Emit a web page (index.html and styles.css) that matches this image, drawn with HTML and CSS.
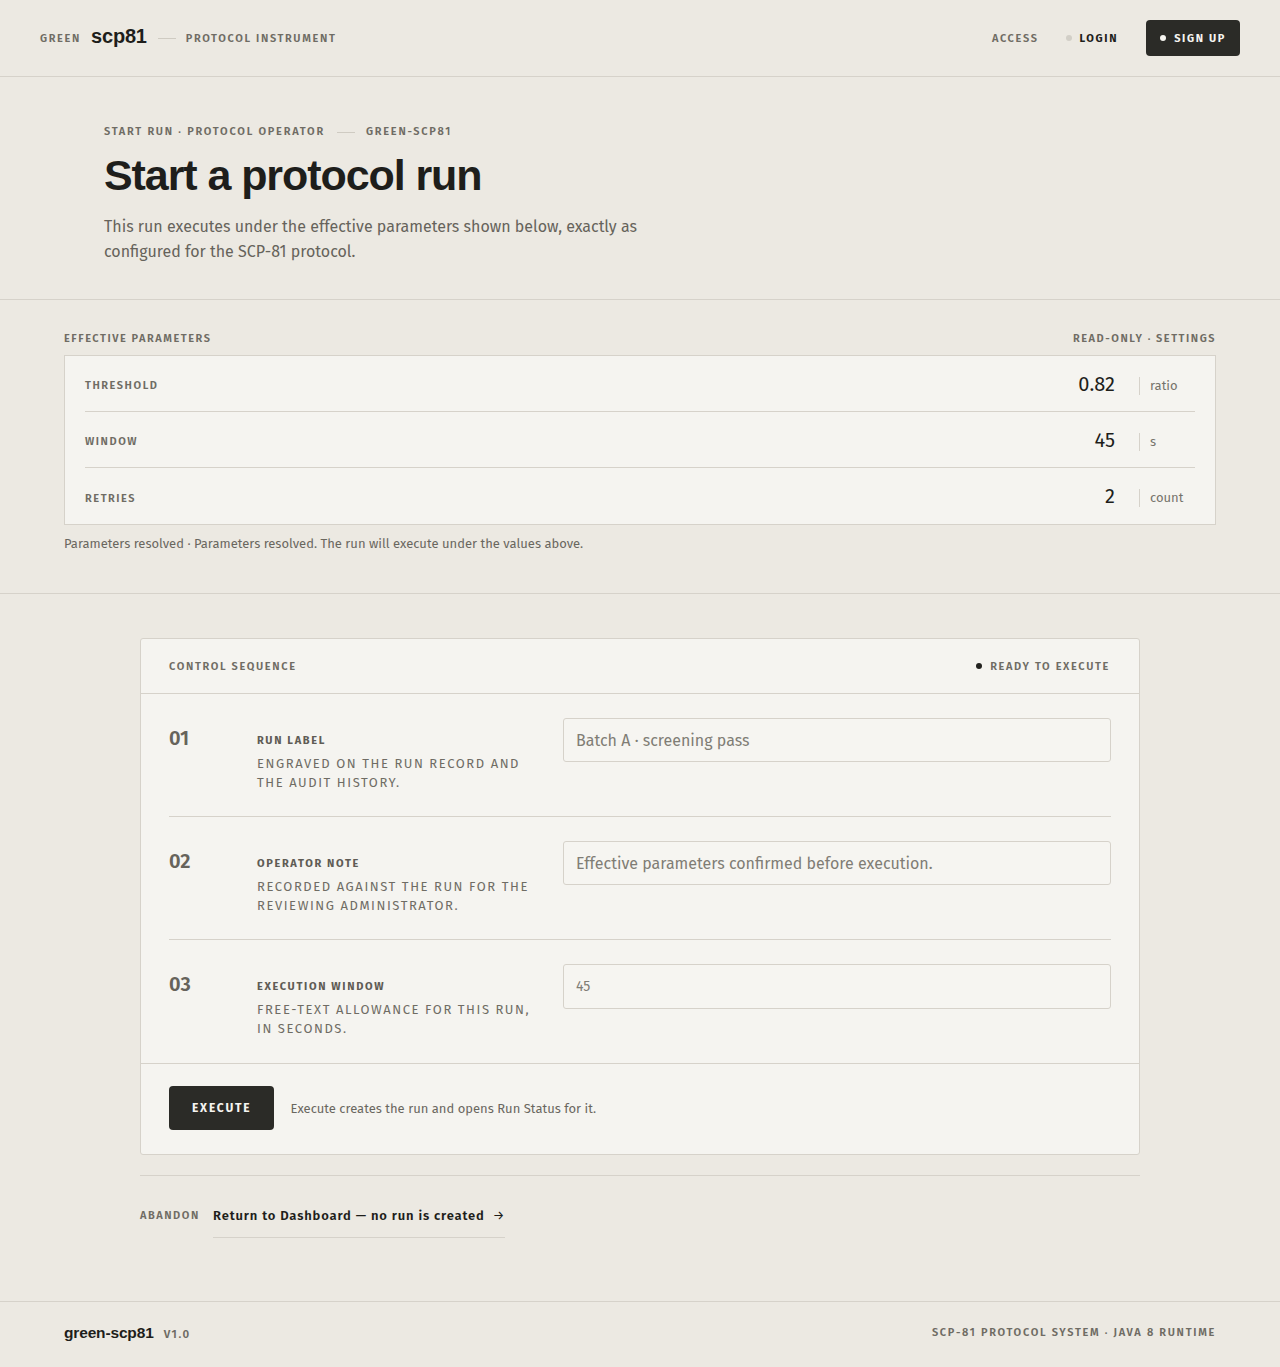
FILE: index.html
```html
<!DOCTYPE html>
<html lang="en">
<head>
<meta charset="utf-8">
<title>Start a protocol run</title>
<link rel="stylesheet" href="styles.css">
</head>
<body>
<header class="topbar">
  <div class="brand">
    <span class="brand-pre">GREEN</span>
    <span class="brand-name">scp81</span>
    <span class="brand-rule"></span>
    <span class="brand-post">PROTOCOL INSTRUMENT</span>
  </div>
  <nav class="nav">
    <span class="nav-access">ACCESS</span>
    <a class="nav-login"><span class="dot dot-light"></span>LOGIN</a>
    <a class="nav-signup"><span class="dot dot-white"></span>SIGN UP</a>
  </nav>
</header>

<section class="hero">
  <div class="eyebrow">
    <span>START RUN · PROTOCOL OPERATOR</span>
    <span class="eyebrow-rule"></span>
    <span>GREEN-SCP81</span>
  </div>
  <h1 class="title">Start a protocol run</h1>
  <p class="lead">This run executes under the effective parameters shown below, exactly as configured for the SCP-81 protocol.</p>
</section>

<section class="params">
  <div class="params-head">
    <span>EFFECTIVE PARAMETERS</span>
    <span>READ-ONLY · SETTINGS</span>
  </div>
  <div class="params-box">
    <div class="param-row">
      <span class="param-key">THRESHOLD</span>
      <span class="param-val">0.82</span>
      <span class="param-unit">ratio</span>
    </div>
    <div class="param-row">
      <span class="param-key">WINDOW</span>
      <span class="param-val">45</span>
      <span class="param-unit">s</span>
    </div>
    <div class="param-row">
      <span class="param-key">RETRIES</span>
      <span class="param-val">2</span>
      <span class="param-unit">count</span>
    </div>
  </div>
  <p class="params-note">Parameters resolved · Parameters resolved. The run will execute under the values above.</p>
</section>

<section class="control">
  <div class="card">
    <div class="card-head">
      <span>CONTROL SEQUENCE</span>
      <span class="ready"><span class="dot dot-dark"></span>READY TO EXECUTE</span>
    </div>
    <div class="steps">
      <div class="step">
        <div class="step-num">01</div>
        <div class="step-text">
          <div class="step-label">RUN LABEL</div>
          <div class="step-desc">ENGRAVED ON THE RUN RECORD AND THE AUDIT HISTORY.</div>
        </div>
        <div class="step-field"><input class="field" type="text" placeholder="Batch A · screening pass"></div>
      </div>
      <div class="step">
        <div class="step-num">02</div>
        <div class="step-text">
          <div class="step-label">OPERATOR NOTE</div>
          <div class="step-desc">RECORDED AGAINST THE RUN FOR THE REVIEWING ADMINISTRATOR.</div>
        </div>
        <div class="step-field"><input class="field" type="text" placeholder="Effective parameters confirmed before execution."></div>
      </div>
      <div class="step">
        <div class="step-num">03</div>
        <div class="step-text">
          <div class="step-label">EXECUTION WINDOW</div>
          <div class="step-desc">FREE-TEXT ALLOWANCE FOR THIS RUN, IN SECONDS.</div>
        </div>
        <div class="step-field"><input class="field field-small" type="text" placeholder="45"></div>
      </div>
    </div>
    <div class="card-foot">
      <button class="execute">EXECUTE</button>
      <span class="foot-note">Execute creates the run and opens Run Status for it.</span>
    </div>
  </div>
  <div class="abandon">
    <span class="abandon-label">ABANDON</span>
    <a class="abandon-link">Return to Dashboard — no run is created <span class="arrow">→</span></a>
  </div>
</section>

<footer class="footer">
  <div class="foot-brand"><span class="foot-name">green-scp81</span><span class="foot-ver">V1.0</span></div>
  <div class="foot-sys">SCP-81 PROTOCOL SYSTEM · JAVA 8 RUNTIME</div>
</footer>
</body>
</html>
```

FILE: styles.css
```css
* { box-sizing: border-box; }

html, body {
  margin: 0;
  padding: 0;
}

body {
  background: #ece9e2;
  color: #1e1e1b;
  font-family: "Fira Sans", "Noto Sans", "Open Sans", sans-serif;
}

a { text-decoration: none; color: inherit; }

.dot {
  display: inline-block;
  width: 6px;
  height: 6px;
  border-radius: 50%;
  margin-right: 8px;
  vertical-align: middle;
  position: relative;
  top: -1px;
}
.dot-light { background: #d2cfc7; }
.dot-white { background: #f5f4f0; }
.dot-dark { background: #23231f; }

/* Top bar */
.topbar {
  height: 77px;
  border-bottom: 1px solid #d6d2ca;
  display: flex;
  align-items: center;
  justify-content: space-between;
  padding: 0 40px;
}
.brand {
  display: flex;
  align-items: center;
}
.brand-pre, .brand-post {
  font-size: 11px;
  font-weight: 600;
  letter-spacing: 0.15em;
  color: #6f6c64;
}
.brand-name {
  font-family: "Liberation Sans", Arial, sans-serif;
  font-weight: 700;
  font-size: 20px;
  letter-spacing: -0.01em;
  color: #1e1e1b;
  margin-left: 10px;
  position: relative;
  top: -2px;
}
.brand-rule {
  display: inline-block;
  width: 18px;
  height: 1px;
  background: #cfcbc2;
  margin: 0 10px 0 11px;
}
.nav {
  display: flex;
  align-items: center;
}
.nav-access {
  font-size: 11px;
  font-weight: 600;
  letter-spacing: 0.15em;
  color: #6f6c64;
  margin-right: 27px;
}
.nav-login {
  font-size: 11px;
  font-weight: 700;
  letter-spacing: 0.15em;
  color: #1e1e1b;
  margin-right: 28px;
}
.nav-signup {
  display: inline-flex;
  align-items: center;
  height: 36px;
  padding: 0 14px;
  background: #2b2b27;
  color: #f5f4f0;
  border-radius: 4px;
  font-size: 11px;
  font-weight: 700;
  letter-spacing: 0.15em;
}
.nav-signup .dot { margin-right: 8px; top: 0; }

/* Hero */
.hero {
  padding: 48px 104px 35px;
  border-bottom: 1px solid #d6d2ca;
}
.eyebrow {
  display: flex;
  align-items: center;
  font-size: 11px;
  font-weight: 600;
  letter-spacing: 0.16em;
  color: #6f6c64;
  line-height: 14px;
}
.eyebrow-rule {
  display: inline-block;
  width: 18px;
  height: 1px;
  background: #cfcbc2;
  margin: 0 11px 0 12px;
}
.title {
  font-family: "Liberation Sans", Arial, sans-serif;
  font-weight: 700;
  font-size: 43px;
  letter-spacing: -0.025em;
  line-height: 52px;
  margin: 10px 0 13px;
  color: #1e1e1b;
}
.lead {
  margin: 0;
  max-width: 560px;
  font-size: 16px;
  line-height: 25px;
  color: #66635b;
}

/* Params */
.params {
  padding: 32px 64px 40px;
  border-bottom: 1px solid #d6d2ca;
}
.params-head {
  display: flex;
  justify-content: space-between;
  font-size: 11px;
  font-weight: 600;
  letter-spacing: 0.14em;
  color: #6f6c64;
  line-height: 14px;
  margin-bottom: 9px;
}
.params-box {
  background: #f5f4f0;
  border: 1px solid #d6d2ca;
  padding: 0 20px;
}
.param-row {
  display: flex;
  align-items: center;
  height: 56px;
  border-bottom: 1px solid #d6d2ca;
}
.param-row:last-child { border-bottom: none; }
.param-key {
  flex: 1;
  font-size: 11px;
  font-weight: 600;
  letter-spacing: 0.14em;
  color: #6f6c64;
  position: relative;
  top: 2px;
}
.param-val {
  font-size: 20px;
  color: #1e1e1b;
  padding-right: 24px;
}
.param-unit {
  width: 56px;
  font-size: 13px;
  color: #76736b;
  border-left: 1px solid #d6d2ca;
  padding-left: 10px;
  line-height: 18px;
  position: relative;
  top: 2px;
}
.params-note {
  margin: 10px 0 0;
  font-size: 13px;
  color: #6a675f;
  line-height: 18px;
}

/* Control */
.control {
  padding: 44px 140px 63px;
}
.card {
  background: #f5f4f0;
  border: 1px solid #d6d2ca;
  border-radius: 3px;
}
.card-head {
  height: 55px;
  border-bottom: 1px solid #d6d2ca;
  display: flex;
  align-items: center;
  justify-content: space-between;
  padding: 0 29px 0 28px;
  font-size: 11px;
  font-weight: 600;
  letter-spacing: 0.15em;
  color: #6f6c64;
}
.ready .dot { margin-right: 8px; }
.steps {
  padding: 0 28px;
}
.step {
  display: grid;
  grid-template-columns: 88px 306px 1fr;
  padding: 24px 0 22px;
  border-bottom: 1px solid #d6d2ca;
  min-height: 123px;
}
.step:last-child { border-bottom: none; }
.step-num {
  font-size: 20px;
  font-weight: 600;
  color: #66635b;
  line-height: 24px;
  padding-top: 8px;
}
.step-label {
  font-size: 11px;
  font-weight: 700;
  letter-spacing: 0.15em;
  color: #5f5c55;
  margin-top: 16px;
  line-height: 14px;
}
.step-desc {
  margin-top: 6px;
  font-size: 13px;
  letter-spacing: 0.12em;
  line-height: 19px;
  color: #6f6c64;
  max-width: 280px;
}
.field {
  width: 100%;
  height: 44px;
  border: 1px solid #d6d2ca;
  border-radius: 3px;
  background: #f6f5f1;
  padding: 0 12px;
  font-family: "Fira Sans", "Noto Sans", "Open Sans", sans-serif;
  font-size: 16px;
  color: #1e1e1b;
  outline: none;
}
.field::placeholder { color: #807d75; }
.field-small { font-size: 14px; height: 45px; }
.card-foot {
  border-top: 1px solid #d6d2ca;
  padding: 22px 28px 24px;
  display: flex;
  align-items: center;
}
.execute {
  height: 44px;
  padding: 0 23px;
  border: none;
  border-radius: 4px;
  background: #2b2b27;
  color: #f5f4f0;
  font-family: "Fira Sans", "Noto Sans", "Open Sans", sans-serif;
  font-size: 12px;
  font-weight: 700;
  letter-spacing: 0.15em;
  margin-right: 16px;
}
.foot-note {
  font-size: 13px;
  color: #6a675f;
}
.abandon {
  margin-top: 20px;
  border-top: 1px solid #d6d2ca;
  padding-top: 31px;
  display: flex;
  align-items: flex-start;
}
.abandon-label {
  font-size: 11px;
  font-weight: 600;
  letter-spacing: 0.14em;
  color: #6f6c64;
  width: 73px;
  line-height: 18px;
}
.abandon-link {
  font-size: 13px;
  font-weight: 600;
  letter-spacing: 0.065em;
  color: #1e1e1b;
  line-height: 18px;
  padding-bottom: 12px;
  border-bottom: 1px solid #d6d2ca;
}
.arrow { margin-left: 4px; font-weight: 400; }

/* Footer */
.footer {
  border-top: 1px solid #d6d2ca;
  height: 62px;
  display: flex;
  align-items: center;
  justify-content: space-between;
  padding: 0 64px;
}
.foot-name {
  font-family: "Liberation Sans", Arial, sans-serif;
  font-weight: 700;
  font-size: 15.5px;
  color: #1e1e1b;
  letter-spacing: -0.01em;
}
.foot-ver {
  font-size: 11.5px;
  font-weight: 600;
  letter-spacing: 0.14em;
  color: #6f6c64;
  margin-left: 10px;
}
.foot-sys {
  font-size: 11px;
  font-weight: 600;
  letter-spacing: 0.155em;
  color: #6f6c64;
}
```
